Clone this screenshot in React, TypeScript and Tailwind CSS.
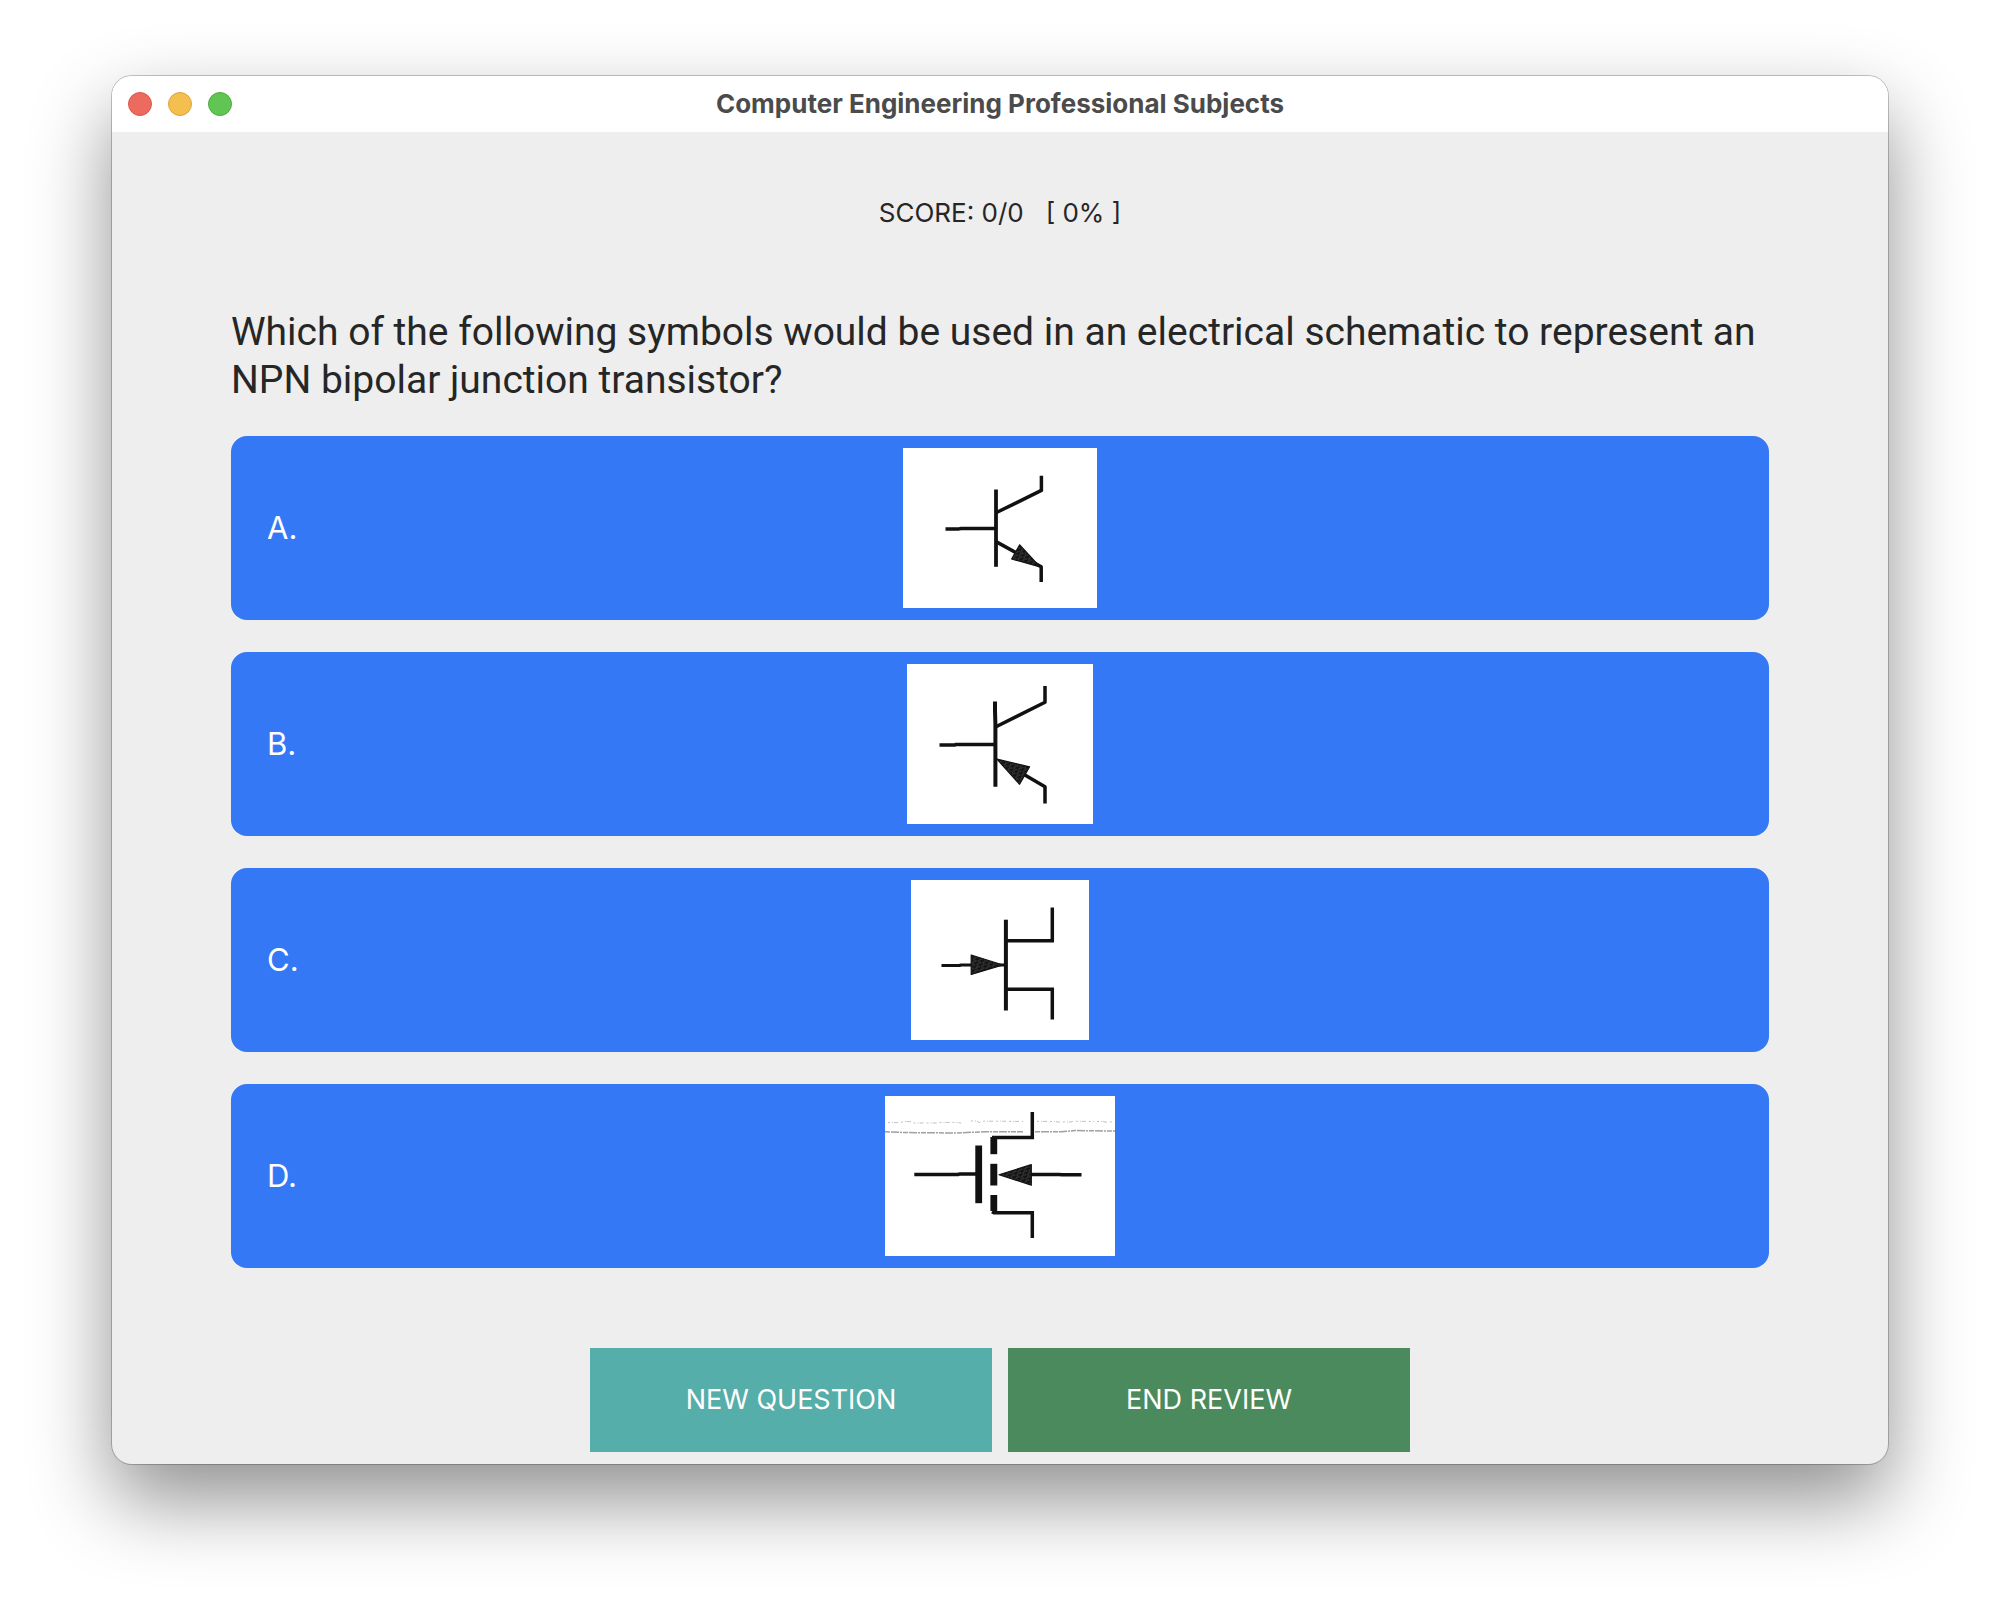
import { useState, type ReactNode } from "react";

const SpecklePattern = () => (
  <defs>
    <pattern id="speckle" width="5" height="4" patternUnits="userSpaceOnUse" patternTransform="rotate(20)">
      <rect width="5" height="4" fill="#2a2a2a" />
      <path d="M0.5 1h1.6M3 2h1.4M1.2 3.2h1.4" stroke="#686868" strokeWidth="0.8" />
    </pattern>
  </defs>
);

function Symbol({ width, label, children }: { width: number; label: string; children: ReactNode }) {
  return (
    <svg
      width={width}
      height={160}
      viewBox={`0 0 ${width} 160`}
      role="img"
      aria-label={label}
      className="bg-white"
      fill="none"
      stroke="#111111"
      strokeWidth="3.5"
      strokeLinejoin="round"
    >
      <SpecklePattern />
      {children}
    </svg>
  );
}

const choices = [
  {
    letter: "A",
    symbol: (
      <Symbol width={194} label="Transistor with outward emitter arrow">
        <path d="M93 41.5V118.8" strokeWidth="3.8" />
        <path d="M42.5 80.9h13.5l2-.4H93" />
        <path d="M93 64.8L138.4 42.4V27.8" />
        <path d="M93 93.6L138.2 118.8V134" />
        <path d="M116.7 96.8L108.6 111L137 118.8Z" fill="url(#speckle)" strokeWidth="1.2" />
      </Symbol>
    ),
  },
  {
    letter: "B",
    symbol: (
      <Symbol width={186} label="Transistor with inward emitter arrow">
        <path d="M88 37.5V47L88.4 60V122.7" strokeWidth="4" />
        <path d="M32.5 81.1h15l1.5-.7H88" />
        <path d="M88.5 63L138 38.2V22" />
        <path d="M117 110.5L138 122.7V139.6" />
        <path d="M90 95.2L122.6 102.8L112.6 120.3Z" fill="url(#speckle)" strokeWidth="1.2" />
      </Symbol>
    ),
  },
  {
    letter: "C",
    symbol: (
      <Symbol width={178} label="Junction field effect transistor">
        <path d="M94.9 39.7V130.5" strokeWidth="4" />
        <path d="M95 60.8H141.3V27.4" strokeLinejoin="miter" />
        <path d="M95 109.3H141.3V139.6" strokeLinejoin="miter" />
        <path d="M30.5 85.5h18l1.5-.5H95" strokeWidth="3.2" />
        <path d="M60.2 75L60.2 94.4L92 85Z" fill="url(#speckle)" strokeWidth="1.2" />
      </Symbol>
    ),
  },
  {
    letter: "D",
    symbol: (
      <Symbol width={230} label="Insulated gate field effect transistor">
        <path d="M3 26.6h12l4-1h6l3 1.4h22l5-.6h16l5 .6M86 25h6l2 1.6 3-1.4h24M124 25.4h14M152 25.4h18l3 .6h12l4-.8 20 .4M212 25.5h6l3 .7 8-.6" stroke="#c0c0c0" strokeWidth="1" strokeDasharray="2 2 1 1 4 3" />
        <path d="M0 35.8L22 36.6L70 37L100 35.8H138M150 35.8H176L190 34.6L230 35" stroke="#a0a0a0" strokeWidth="1.5" strokeDasharray="5 1 8 1 2 1" />
        <path d="M29.3 78.5H73l2-.6H92" />
        <path d="M93.7 49.5V107.2" strokeWidth="6.8" />
        <path d="M108.8 41V58.2" strokeWidth="6.8" />
        <path d="M108.8 67.8V89.5" strokeWidth="7" />
        <path d="M108.8 99V115" strokeWidth="6.8" />
        <path d="M107 41.5H147.3V16" strokeLinejoin="miter" />
        <path d="M107 115.6l2 1.1H147.3V142" strokeLinejoin="miter" />
        <path d="M146 78.5H174l3 .3H196.5" />
        <path d="M114 78.7L146.3 68.6V89.2Z" fill="url(#speckle)" strokeWidth="1.2" />
      </Symbol>
    ),
  },
];

function TitleBar() {
  return (
    <header className="grid h-14 grid-cols-[1fr_auto_1fr] items-center bg-white px-4">
      <div className="flex gap-4">
        <button aria-label="Close" className="size-6 rounded-full border border-[#d9594e] bg-[#ec6a5e]" />
        <button aria-label="Minimize" className="size-6 rounded-full border border-[#dba43d] bg-[#f4bf4f]" />
        <button aria-label="Zoom" className="size-6 rounded-full border border-[#4faa3e] bg-[#61c554]" />
      </div>
      <h1 className="text-[26px] leading-8 font-bold text-[#4b4b4b]">Computer Engineering Professional Subjects</h1>
    </header>
  );
}

export default function App() {
  const [selected, setSelected] = useState<string | null>(null);

  return (
    <div className="min-h-screen bg-white px-28 pt-19 pb-37 font-['Inter',sans-serif]">
      <div className="overflow-hidden rounded-[20px] bg-[#eeeeee] shadow-[0_0_0_1px_rgba(0,0,0,0.22),0_36px_80px_rgba(0,0,0,0.44)]">
        <TitleBar />
        <main className="px-[119px] pt-16 pb-3 text-[#262626]">
          <p className="text-center text-[26px] leading-[34px] whitespace-pre">SCORE: 0/0   [ 0% ]</p>
          <h2 className="mt-[78px] font-['Roboto',sans-serif] text-[39px] leading-12">
            Which of the following symbols would be used in an electrical schematic to represent an NPN bipolar
            junction transistor?
          </h2>
          <div className="mt-8 flex flex-col gap-8">
            {choices.map(({ letter, symbol }) => (
              <button
                key={letter}
                aria-pressed={selected === letter}
                onClick={() => setSelected(letter)}
                className="grid grid-cols-[1fr_auto_1fr] items-center rounded-2xl bg-[#3478f6] px-9 py-3 text-left text-[31px] leading-10 text-white"
              >
                <span>{letter}.</span>
                {symbol}
              </button>
            ))}
          </div>
          <div className="mt-20 flex justify-center gap-4 text-[27px] leading-10 text-white">
            <button className="h-26 w-[402px] bg-[#55aea9]">NEW QUESTION</button>
            <button className="h-26 w-[402px] bg-[#4a8a5c]">END REVIEW</button>
          </div>
        </main>
      </div>
    </div>
  );
}
